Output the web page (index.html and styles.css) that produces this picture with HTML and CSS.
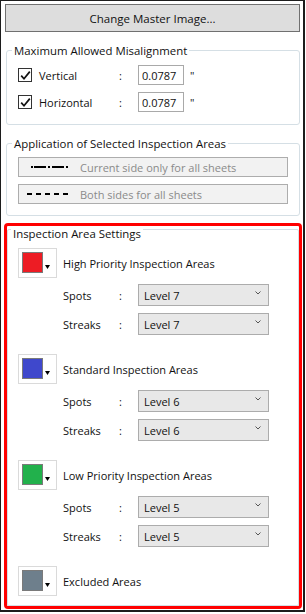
FILE: index.html
```html
<!DOCTYPE html>
<html lang="en">
  <head>
    <meta charset="UTF-8" />
    <meta name="viewport" content="width=device-width, initial-scale=1.0" />
    <title>Inspection Settings</title>
    <link rel="stylesheet" href="styles.css">
  </head>
  <body>
    <div class="window">
      <button class="master-btn">Change Master Image...</button>

      <div class="group misalign">
        <span class="group-title">Maximum Allowed Misalignment</span>
        <div class="align-rows">
          <div class="align-row">
            <span class="check">
              <svg width="11" height="11" viewBox="0 0 11 11"><path d="M1.2 5.6 L4 8.8 L9.8 1.6" fill="none" stroke="#111" stroke-width="1.7"/></svg>
            </span>
            <span class="align-label">Vertical</span>
            <span class="colon">:</span>
            <input class="num" type="text" value="0.0787" />
            <span class="unit">"</span>
          </div>
          <div class="align-row">
            <span class="check">
              <svg width="11" height="11" viewBox="0 0 11 11"><path d="M1.2 5.6 L4 8.8 L9.8 1.6" fill="none" stroke="#111" stroke-width="1.7"/></svg>
            </span>
            <span class="align-label">Horizontal</span>
            <span class="colon">:</span>
            <input class="num" type="text" value="0.0787" />
            <span class="unit">"</span>
          </div>
        </div>
      </div>

      <div class="group apply">
        <span class="group-title">Application of Selected Inspection Areas</span>
        <div class="apply-list">
          <button class="apply-btn" disabled>
            <svg width="42" height="4" viewBox="0 0 42 4">
              <rect x="4" y="1" width="2" height="2" fill="#000"/>
              <rect x="7" y="1" width="12" height="2" fill="#000"/>
              <rect x="21" y="1" width="2" height="2" fill="#000"/>
              <rect x="25" y="1" width="12" height="2" fill="#000"/>
              <rect x="39" y="1" width="2" height="2" fill="#000"/>
            </svg>
            Current side only for all sheets
          </button>
          <button class="apply-btn" disabled>
            <svg width="42" height="4" viewBox="0 0 42 4">
              <rect x="0" y="1" width="5" height="2" fill="#000"/>
              <rect x="9" y="1" width="5" height="2" fill="#000"/>
              <rect x="18" y="1" width="5" height="2" fill="#000"/>
              <rect x="27" y="1" width="5" height="2" fill="#000"/>
              <rect x="36" y="1" width="5" height="2" fill="#000"/>
            </svg>
            Both sides for all sheets
          </button>
        </div>
      </div>

      <div class="highlight">
        <div class="group settings">
          <span class="group-title">Inspection Area Settings</span>

          <div class="area">
            <div class="area-head">
              <button class="swatch-btn"><span class="swatch red"></span><svg class="caret" width="5" height="4" viewBox="0 0 5 4"><path d="M0 0 H5 L2.5 4 Z" fill="#000"/></svg></button>
              <span>High Priority Inspection Areas</span>
            </div>
            <div class="level-row">
              <span class="level-label">Spots</span><span class="colon">:</span>
              <div class="dropdown">Level 7<svg width="6" height="4" viewBox="0 0 6 4"><path d="M0.5 0.5 L3 3 L5.5 0.5" fill="none" stroke="#555" stroke-width="1"/></svg></div>
            </div>
            <div class="level-row">
              <span class="level-label">Streaks</span><span class="colon">:</span>
              <div class="dropdown">Level 7<svg width="6" height="4" viewBox="0 0 6 4"><path d="M0.5 0.5 L3 3 L5.5 0.5" fill="none" stroke="#555" stroke-width="1"/></svg></div>
            </div>
          </div>

          <div class="area">
            <div class="area-head">
              <button class="swatch-btn"><span class="swatch blue"></span><svg class="caret" width="5" height="4" viewBox="0 0 5 4"><path d="M0 0 H5 L2.5 4 Z" fill="#000"/></svg></button>
              <span>Standard Inspection Areas</span>
            </div>
            <div class="level-row">
              <span class="level-label">Spots</span><span class="colon">:</span>
              <div class="dropdown">Level 6<svg width="6" height="4" viewBox="0 0 6 4"><path d="M0.5 0.5 L3 3 L5.5 0.5" fill="none" stroke="#555" stroke-width="1"/></svg></div>
            </div>
            <div class="level-row">
              <span class="level-label">Streaks</span><span class="colon">:</span>
              <div class="dropdown">Level 6<svg width="6" height="4" viewBox="0 0 6 4"><path d="M0.5 0.5 L3 3 L5.5 0.5" fill="none" stroke="#555" stroke-width="1"/></svg></div>
            </div>
          </div>

          <div class="area">
            <div class="area-head">
              <button class="swatch-btn"><span class="swatch green"></span><svg class="caret" width="5" height="4" viewBox="0 0 5 4"><path d="M0 0 H5 L2.5 4 Z" fill="#000"/></svg></button>
              <span>Low Priority Inspection Areas</span>
            </div>
            <div class="level-row">
              <span class="level-label">Spots</span><span class="colon">:</span>
              <div class="dropdown">Level 5<svg width="6" height="4" viewBox="0 0 6 4"><path d="M0.5 0.5 L3 3 L5.5 0.5" fill="none" stroke="#555" stroke-width="1"/></svg></div>
            </div>
            <div class="level-row">
              <span class="level-label">Streaks</span><span class="colon">:</span>
              <div class="dropdown">Level 5<svg width="6" height="4" viewBox="0 0 6 4"><path d="M0.5 0.5 L3 3 L5.5 0.5" fill="none" stroke="#555" stroke-width="1"/></svg></div>
            </div>
          </div>

          <div class="area">
            <div class="area-head">
              <button class="swatch-btn"><span class="swatch gray"></span><svg class="caret" width="5" height="4" viewBox="0 0 5 4"><path d="M0 0 H5 L2.5 4 Z" fill="#000"/></svg></button>
              <span>Excluded Areas</span>
            </div>
          </div>
        </div>
      </div>
    </div>
  </body>
</html>
```

FILE: styles.css
```css
body {
  margin: 0;
  padding: 0;
  background-color: #ffffff;
  font-family: "Open Sans", "Noto Sans", sans-serif;
  font-size: 11px;
  color: #111111;
}
.window {
  display: flex;
  flex-direction: column;
  width: 302px;
  height: 609px;
  border-style: solid;
  border-color: #1c1c1c;
  border-width: 1px 2px 2px 1px;
  background-color: #ffffff;
}
button {
  font-family: inherit;
  font-size: inherit;
  color: inherit;
  margin: 0;
  padding: 0;
}
.master-btn {
  height: 28px;
  margin: 3px 3px 0 4px;
  background-color: #dddddd;
  border: 1px solid #707070;
  font-size: 11.5px;
}

/* group boxes */
.group {
  display: flex;
  flex-direction: column;
  border: 1px solid #d5dfe5;
  border-radius: 3px;
}
.group-title {
  align-self: flex-start;
  margin: -8px 0 0 5px;
  padding: 0 2px;
  line-height: 16px;
  font-size: 11.4px;
  background-color: #ffffff;
}
.misalign {
  margin: 18px 3px 0 5px;
  padding-bottom: 12px;
}
.align-rows {
  display: flex;
  flex-direction: column;
  gap: 7px;
  margin-top: 6px;
  padding-left: 11px;
}
.align-row {
  display: flex;
  align-items: center;
  height: 20px;
}
.check {
  display: flex;
  align-items: center;
  justify-content: center;
  width: 12px;
  height: 12px;
  border: 1px solid #333333;
  margin-right: 7px;
}
.align-label {
  width: 80px;
}
.colon {
  width: 19px;
}
.num {
  box-sizing: border-box;
  width: 46px;
  height: 20px;
  padding: 0 0 0 3px;
  border: 1px solid #a9a9a9;
  font-family: inherit;
  font-size: 11px;
  color: #111111;
  outline: none;
}
.unit {
  margin-left: 6px;
}
.apply {
  margin: 18px 3px 0 5px;
  padding-bottom: 11px;
}
.apply-list {
  display: flex;
  flex-direction: column;
  gap: 7px;
  margin-top: 5px;
  padding: 0 11px;
}
.apply-btn {
  display: flex;
  align-items: center;
  height: 20px;
  padding-left: 8px;
  background-color: #f2f2f2;
  border: 1px solid #adadad;
  color: #8a8a8a;
}
.apply-btn svg {
  margin-right: 11px;
}

/* highlighted settings */
.highlight {
  display: flex;
  flex: 1;
  margin: 7px 1px 1px 3px;
  border: 3px solid #ff0000;
  border-radius: 4px;
}
.settings {
  flex: 1;
  margin-top: 3px;
  padding-left: 10px;
  border-radius: 2px;
}
.settings .group-title {
  margin: -4px 0 0 -7px;
}
.area {
  display: flex;
  flex-direction: column;
  gap: 7px;
  margin-top: 6px;
}
.area + .area {
  margin-top: 19px;
}
.area-head {
  display: flex;
  align-items: center;
  gap: 6px;
  margin-bottom: -1px;
}
.swatch-btn {
  display: flex;
  align-items: flex-start;
  box-sizing: border-box;
  width: 39px;
  height: 30px;
  padding: 3px 0 0 3px;
  background-color: #ffffff;
  border: 1px solid #dadada;
}
.swatch {
  width: 19px;
  height: 19px;
  border: 1px solid #7a7a7a;
}
.swatch.red { background-color: #ed1c24; }
.swatch.blue { background-color: #3f48cc; }
.swatch.green { background-color: #22b14c; }
.swatch.gray { background-color: #6e7f8c; }
.caret {
  margin: 13px 0 0 2px;
}
.level-row {
  display: flex;
  align-items: center;
  padding-left: 45px;
}
.level-label {
  width: 56px;
}
.dropdown {
  display: flex;
  align-items: center;
  justify-content: space-between;
  box-sizing: border-box;
  width: 131px;
  height: 22px;
  padding: 0 7px 0 5px;
  background-color: #e8e8e8;
  border: 1px solid #acacac;
}
.dropdown svg {
  margin-top: -5px;
}
```
